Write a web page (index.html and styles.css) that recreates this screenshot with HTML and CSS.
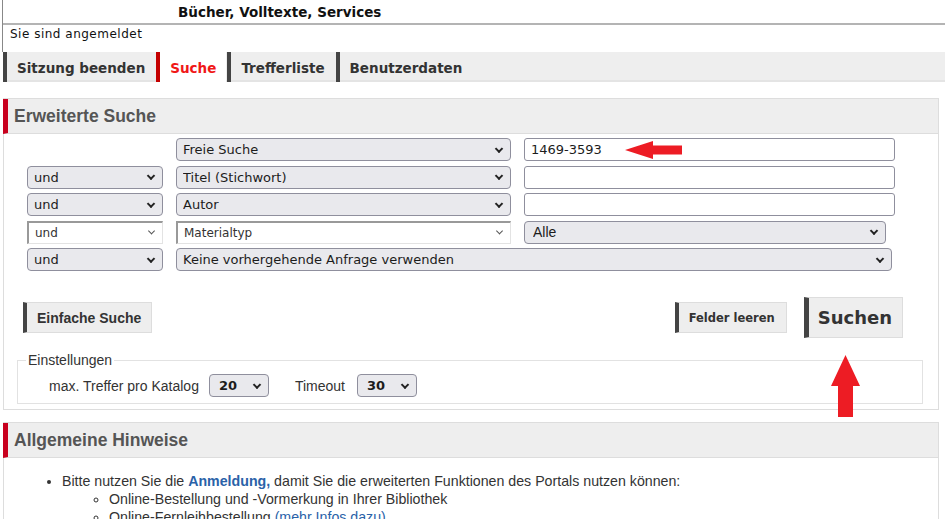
FILE: index.html
```html
<!DOCTYPE html>
<html lang="de">
  <head>
    <meta charset="utf-8" />
    <title>Erweiterte Suche</title>
    <meta name="viewport" content="width=device-width, initial-scale=1" />
    <link rel="stylesheet" href="styles.css">
  </head>
  <body>
    <div class="page">
      <div class="top">
        <div class="brand">Bücher, Volltexte, Services</div>
        <div class="login">Sie sind angemeldet</div>
      </div>

      <nav class="tabs">
        <a href="#">Sitzung beenden</a>
        <a href="#" class="active">Suche</a>
        <a href="#">Trefferliste</a>
        <a href="#">Benutzerdaten</a>
      </nav>

      <section class="panel">
        <h2 class="panel-head">Erweiterte Suche</h2>
        <form class="search" onsubmit="return false">
          <div class="fields">
            <span></span>
            <span class="sel"><select><option>Freie Suche</option></select></span>
            <input type="text" value="1469-3593" />

            <span class="sel"><select><option>und</option><option>oder</option><option>und nicht</option></select></span>
            <span class="sel"><select><option>Titel (Stichwort)</option></select></span>
            <input type="text" />

            <span class="sel"><select><option>und</option><option>oder</option><option>und nicht</option></select></span>
            <span class="sel"><select><option>Autor</option></select></span>
            <input type="text" />

            <span class="sel plain"><select><option>und</option></select></span>
            <span class="sel plain"><select><option>Materialtyp</option></select></span>
            <span class="sel alle"><select><option>Alle</option></select></span>

            <span class="sel"><select><option>und</option></select></span>
            <span class="sel span"><select><option>Keine vorhergehende Anfrage verwenden</option></select></span>
          </div>

          <div class="actions">
            <button type="button" class="btn">Einfache Suche</button>
            <div class="actions-right">
              <button type="reset" class="btn btn-clear">Felder leeren</button>
              <button type="submit" class="btn btn-go">Suchen</button>
            </div>
          </div>

          <fieldset class="settings">
            <legend>Einstellungen</legend>
            <div class="settings-row">
              <label>max. Treffer pro Katalog</label>
              <span class="sel small"><select><option>20</option><option>50</option></select></span>
              <label class="gap">Timeout</label>
              <span class="sel small"><select><option>30</option><option>60</option></select></span>
            </div>
          </fieldset>
        </form>
      </section>

      <section class="panel">
        <h2 class="panel-head">Allgemeine Hinweise</h2>
        <ul class="hints">
          <li>
            Bitte nutzen Sie die <a href="#" class="strong">Anmeldung,</a> damit Sie die erweiterten Funktionen des Portals nutzen können:
            <ul>
              <li>Online-Bestellung und -Vormerkung in Ihrer Bibliothek</li>
              <li>Online-Fernleihbestellung <a href="#">(mehr Infos dazu)</a></li>
            </ul>
          </li>
        </ul>
      </section>

      <!-- red markers from the screenshot -->
      <svg class="marker marker-left" width="58" height="20" viewBox="0 0 58 20">
        <polygon points="0,10 28,1 28,5.5 57,5.5 57,14.5 28,14.5 28,19" />
      </svg>
      <svg class="marker marker-up" width="32" height="62" viewBox="0 0 32 62">
        <polygon points="15.5,0 30,31 23,31 23,62 8,62 8,31 1,31" />
      </svg>
    </div>
  </body>
</html>
```

FILE: styles.css
```css
body {
  margin: 0;
  font-family: "Liberation Sans", Arial, sans-serif;
  font-size: 14px;
  color: #333;
  background: #fff;
}
.page {
  position: relative;
  padding-bottom: 40px;
}
a {
  color: #2a62a8;
  text-decoration: none;
}

/* header */
.top {
  margin-left: 2px;
  border-left: 1px solid #888;
  font-family: "DejaVu Sans", Verdana, sans-serif;
}
.brand {
  height: 23px;
  line-height: 25px;
  padding-left: 175px;
  font-size: 13.5px;
  font-weight: bold;
  color: #111;
  border-bottom: 2px solid #b4b4b4;
}
.login {
  height: 26px;
  padding: 1px 0 0 7px;
  line-height: 16px;
  font-size: 12px;
  letter-spacing: 0.5px;
  color: #111;
}

/* tabs */
.tabs {
  display: flex;
  gap: 1px;
  margin-left: 3px;
  height: 28px;
  background: #eee;
  border-bottom: 2px solid #e4e4e4;
  font-family: "DejaVu Sans", Verdana, sans-serif;
}
.tabs a {
  display: block;
  height: 29px;
  padding: 1px 10px 0;
  line-height: 30px;
  border-left: 4px solid #444;
  font-size: 13.5px;
  font-weight: bold;
  color: #333;
}
.tabs a.active {
  background: #fff;
  color: #f01818;
  border-left-color: #c40000;
}

/* panels */
.panel {
  margin: 16px 6px 0 3px;
  border: 1px solid #ddd;
}
.panel + .panel {
  margin-top: 12px;
}
.panel-head {
  margin: 0 0 0 -1px;
  height: 34px;
  line-height: 34px;
  padding-left: 6px;
  background: #eee;
  border-left: 5px solid #c8001e;
  border-bottom: 1px solid #ddd;
  font-size: 17.5px;
  font-weight: bold;
  color: #555;
}

/* search form */
.search {
  padding-bottom: 5px;
}
.fields {
  display: grid;
  grid-template-columns: 136px 335px 371px;
  grid-auto-rows: 23px;
  column-gap: 13px;
  row-gap: 4.5px;
  padding: 4px 0 0 23px;
}
.fields input {
  box-sizing: border-box;
  height: 23px;
  margin: 0;
  padding: 0 6px;
  border: 1px solid #8f8f9d;
  border-radius: 3px;
  font: 13px "DejaVu Sans", Verdana, sans-serif;
  color: #1c1c1c;
}
.sel {
  position: relative;
  display: block;
}
.sel select {
  -webkit-appearance: none;
  appearance: none;
  box-sizing: border-box;
  width: 100%;
  height: 23px;
  margin: 0;
  padding: 0 24px 0 6px;
  background: #e9e9ed;
  border: 1px solid #8f8f9d;
  border-radius: 4px;
  font: 13px "DejaVu Sans", Verdana, sans-serif;
  color: #1c1c1c;
}
.sel::after {
  content: "";
  position: absolute;
  right: 9px;
  top: 50%;
  width: 4px;
  height: 4px;
  border-right: 2px solid #222;
  border-bottom: 2px solid #222;
  transform: translateY(-70%) rotate(45deg);
  pointer-events: none;
}
.sel.plain select {
  background: #fff;
  border-radius: 0;
  border-width: 2px 1px 1px 2px;
  border-color: #999 #e3e3e3 #e3e3e3 #999;
  font-size: 12px;
  color: #333;
}
.sel.plain::after {
  border-width: 0 1px 1px 0;
  border-color: #555;
}
.sel.alle {
  width: 362px;
}
.sel.alle select {
  font: 14px "Liberation Sans", Arial, sans-serif;
  padding-left: 8px;
}
.sel.span {
  grid-column: 2 / 4;
  width: 716px;
}

.actions {
  display: flex;
  align-items: center;
  justify-content: space-between;
  margin-top: 26px;
  padding: 0 35px 0 19px;
}
.actions-right {
  display: flex;
  align-items: center;
  gap: 17px;
}
.btn {
  height: 31px;
  margin: 0;
  padding: 0 10px;
  background: #eee;
  border: 1px solid #ddd;
  border-left: 4px solid #444;
  font: bold 14px "Liberation Sans", Arial, sans-serif;
  color: #333;
  cursor: pointer;
}
.btn-clear {
  padding-right: 11px;
  font: bold 11.5px "DejaVu Sans", Verdana, sans-serif;
}
.btn-go {
  height: 41px;
  padding: 0 10px 0 9px;
  border-left-width: 5px;
  font: bold 18px "DejaVu Sans", Verdana, sans-serif;
}

.settings {
  margin: 14px 15px 0 13px;
  padding: 6px 8px 6px 8px;
  border: 1px solid #e2e2e2;
}
.settings legend {
  padding: 0 2px;
  line-height: 16px;
  font-size: 14px;
  color: #333;
}
.settings-row {
  display: flex;
  align-items: center;
  padding-left: 23px;
}
.settings-row .gap {
  margin-left: 26px;
}
.sel.small {
  width: 60px;
  margin-left: 10px;
}
.settings-row .gap + .sel.small {
  margin-left: 12px;
}
.sel.small select {
  padding-left: 9px;
  font-weight: bold;
}

/* hints */
.hints {
  margin: 14px 0 0;
  padding-left: 58px;
  line-height: 18px;
  font-size: 14.2px;
}
.hints ul {
  margin: 0;
  padding-left: 47px;
  list-style: circle;
}
.hints .strong {
  font-weight: bold;
}

.marker {
  position: absolute;
  fill: #ed1c24;
}
.marker-left {
  left: 625px;
  top: 140px;
}
.marker-up {
  left: 830px;
  top: 355px;
}
```
